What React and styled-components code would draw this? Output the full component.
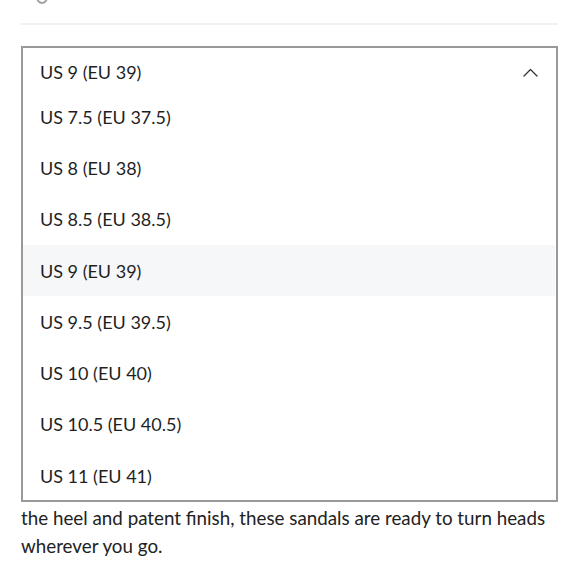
import React from "react";
import styled, { createGlobalStyle } from "styled-components";

const Global = createGlobalStyle`
  html, body { margin: 0; padding: 0; background: #fff; }
  body { font-family: Lato, "Noto Sans", sans-serif; color: #222; }
  * { box-sizing: border-box; }
`;

const Page = styled.div`
  width: 580px;
  height: 580px;
  overflow: hidden;
  padding: 0 22px 0 21px;
`;

const SwatchRow = styled.div`
  display: flex;
  align-items: flex-start;
  height: 23px;
  padding-left: 15px;
`;

const Swatch = styled.div`
  width: 12px;
  height: 14px;
  margin-top: -10px;
  border-radius: 50%;
  border: 2px solid #a3a3a3;
`;

const Divider = styled.div`
  height: 2px;
  background: #f1f1f1;
`;

const Field = styled.div`
  position: relative;
  margin-top: 21px;
  height: 52px;
`;

const Dropdown = styled.div`
  position: absolute;
  top: 0;
  left: 0;
  right: 0;
  height: 456px;
  border: 2px solid #999;
  background: #fff;
  z-index: 2;
`;

const Header = styled.div`
  height: 43px;
  padding: 5px 18px 0 17px;
  display: flex;
  align-items: center;
  justify-content: space-between;
  font-size: 18px;
  color: #1f1f1f;
`;

const List = styled.ul`
  list-style: none;
  margin: 0 1px 0 0;
  padding: 0;
`;

const Option = styled.li`
  height: 51.3px;
  display: flex;
  align-items: center;
  padding-left: 17px;
  font-size: 18px;
  color: #1f1f1f;
  background: ${(p) => (p.$active ? "#f6f7f9" : "transparent")};
`;

const Description = styled.p`
  margin: 378px 0 0;
  font-size: 18.8px;
  line-height: 28px;
  color: #222;
`;

const Chevron = () => (
  <svg width="15" height="9" viewBox="0 0 15 9" fill="none">
    <polyline
      points="1,8 7.5,1.5 14,8"
      stroke="#333"
      strokeWidth="1.3"
      strokeLinecap="round"
      strokeLinejoin="round"
    />
  </svg>
);

const sizes = [
  "US 7.5 (EU 37.5)",
  "US 8 (EU 38)",
  "US 8.5 (EU 38.5)",
  "US 9 (EU 39)",
  "US 9.5 (EU 39.5)",
  "US 10 (EU 40)",
  "US 10.5 (EU 40.5)",
  "US 11 (EU 41)",
];

export default function App() {
  const selected = "US 9 (EU 39)";
  return (
    <>
      <Global />
      <Page>
        <SwatchRow>
          <Swatch />
        </SwatchRow>
        <Divider />
        <Field>
          <Dropdown>
            <Header>
              <span>{selected}</span>
              <Chevron />
            </Header>
            <List>
              {sizes.map((s) => (
                <Option key={s} $active={s === selected}>
                  {s}
                </Option>
              ))}
            </List>
          </Dropdown>
        </Field>
        <Description>
          Step out in style. With the sculpted shape of
          <br />
          the heel and patent finish, these sandals are ready to turn heads wherever you go.
        </Description>
      </Page>
    </>
  );
}
